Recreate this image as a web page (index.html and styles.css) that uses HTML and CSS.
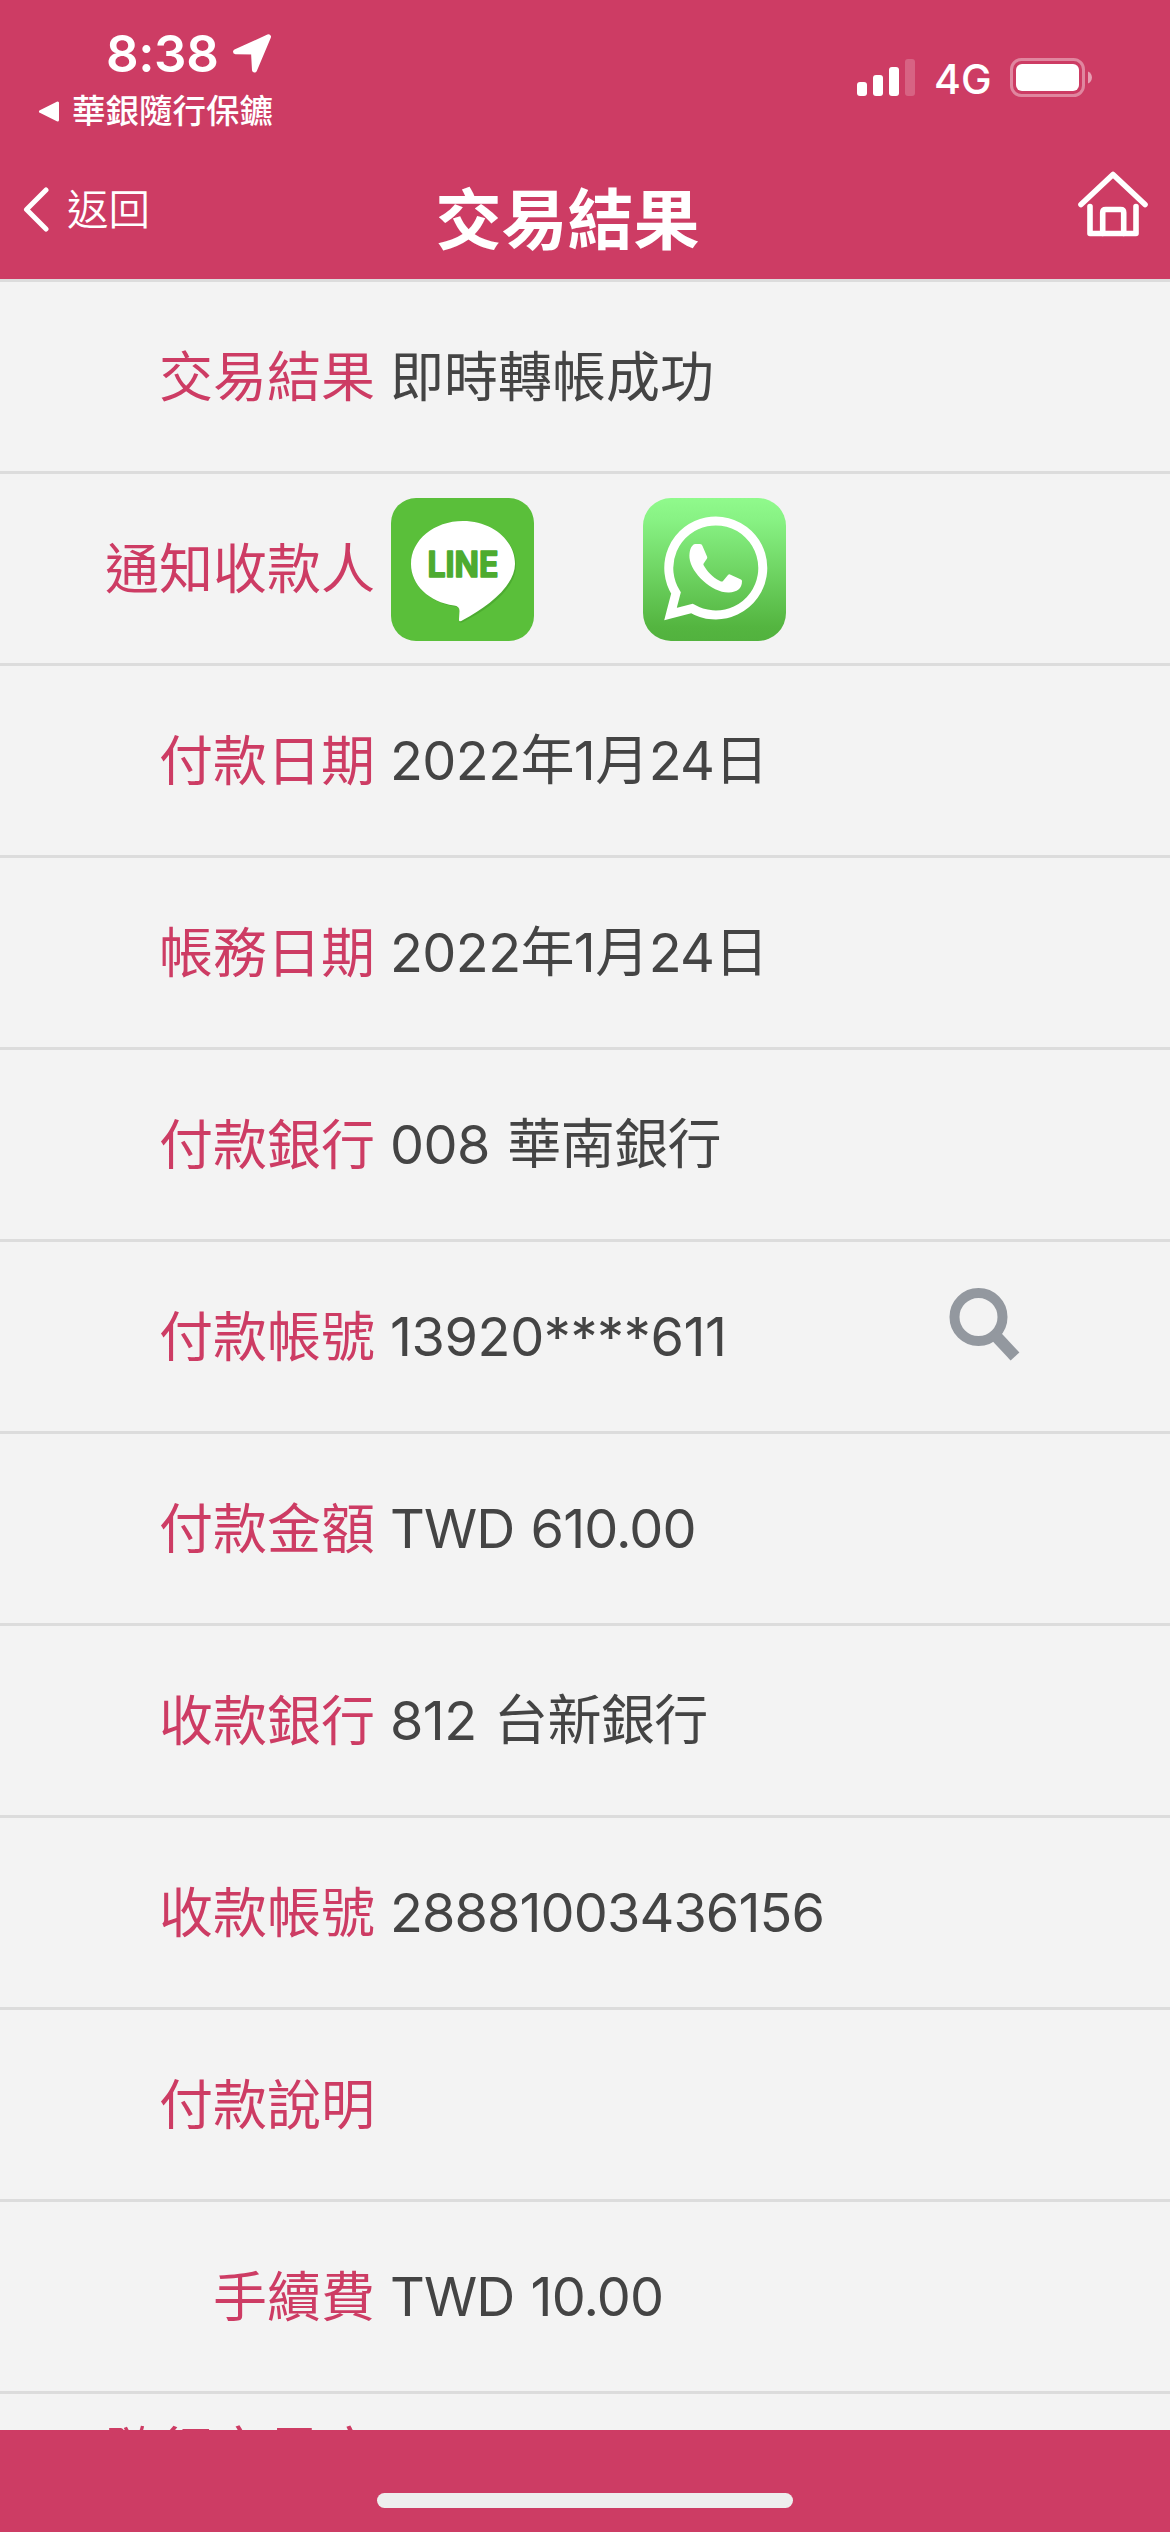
FILE: index.html
```html
<!DOCTYPE html>
<html lang="zh-Hant">

<head>
    <meta charset="UTF-8">
    <meta name="viewport" content="width=device-width, initial-scale=1.0">
    <title>交易結果</title>
    <link rel="stylesheet" href="styles.css">
</head>

<body>
    <header class="header">
        <div class="status-bar">
            <div class="status-left">
                <div class="clock">
                    <span class="time">8:38</span>
                    <svg class="location" viewBox="0 0 40 40">
                        <path d="M3.5 17.8 L36.5 2.8 L22.5 36 L21.5 18 Z" fill="#fff" stroke="#fff" stroke-width="5" stroke-linejoin="round" />
                    </svg>
                </div>
                <div class="back-app">
                    <svg class="triangle" viewBox="0 0 22 21">
                        <path d="M2.5 10.5 L19.5 2 V19 Z" fill="#fff" stroke="#fff" stroke-width="3" stroke-linejoin="round" />
                    </svg>
                    <span>華銀隨行保鑣</span>
                </div>
            </div>
            <div class="status-right">
                <svg class="signal" viewBox="0 0 58 37" fill="#fff">
                    <rect x="0" y="23" width="10" height="14" rx="3" />
                    <rect x="16" y="16" width="10" height="21" rx="3" />
                    <rect x="32" y="8" width="10" height="29" rx="3" />
                    <rect x="48" y="0" width="10" height="37" rx="3" opacity="0.2" />
                </svg>
                <span class="network">4G</span>
                <svg class="battery" viewBox="0 0 82 39">
                    <rect x="1.5" y="1.5" width="72" height="36" rx="10" fill="none" stroke="#fff" stroke-opacity="0.38" stroke-width="3" />
                    <rect x="6" y="6" width="63" height="27" rx="6" fill="#fff" />
                    <path d="M78 13.5 C83.3 15.5 83.3 23.5 78 25.5 Z" fill="#fff" fill-opacity="0.5" />
                </svg>
            </div>
        </div>
        <nav class="nav">
            <div class="back">
                <svg class="chevron" viewBox="0 0 26 46">
                    <path d="M23 3 L3.5 22.5 L23 42" fill="none" stroke="#fff" stroke-width="5" stroke-linecap="round" stroke-linejoin="round" />
                </svg>
                <span>返回</span>
            </div>
            <h1 class="title">交易結果</h1>
            <svg class="home" viewBox="0 0 70 66" fill="none" stroke="#fff" stroke-width="5.6" stroke-linecap="round" stroke-linejoin="round">
                <path d="M3 33.5 L35 3.5 L67 33.5" />
                <path d="M12 35.5 V62.5 H58 V35.5" />
                <path d="M24.7 62.5 V41.5 Q24.7 38.5 27.7 38.5 H42.7 Q45.7 38.5 45.7 41.5 V62.5" />
            </svg>
        </nav>
    </header>

    <main class="list">
        <div class="row">
            <div class="label">交易結果</div>
            <div class="value chinese">即時轉帳成功</div>
        </div>
        <div class="row">
            <div class="label">通知收款人</div>
            <div class="value share">
                <svg class="app" viewBox="0 0 143 143">
                    <rect width="143" height="143" rx="25" fill="#5abf3a" />
                    <path d="M72 24 C101 24 125 42 125 67 C125 91 98 111 72 124 Q68 126 68.5 122 L69 114 Q69 109 64 108.5 C40 105 20 88 20 67 C20 42 43 24 72 24 Z" fill="#3f9a27" opacity="0.5" />
                    <path d="M72 23 C101 23 124 42 124 66 C124 88 96 109 72 122 Q67.5 125 68 121 L68.5 113 Q68.5 108 63 107.5 C38 104 20 87 20 66 C20 42 43 23 72 23 Z" fill="#fff" />
                    <text class="line-text" x="36.5" y="79" textLength="71" lengthAdjust="spacingAndGlyphs">LINE</text>
                </svg>
                <svg class="app" viewBox="0 0 143 143">
                    <defs>
                        <linearGradient id="wa" x1="0" y1="0" x2="0" y2="1">
                            <stop offset="0" stop-color="#90fa8c" />
                            <stop offset="0.15" stop-color="#88f284" />
                            <stop offset="0.9" stop-color="#54b540" />
                            <stop offset="1" stop-color="#52b23e" />
                        </linearGradient>
                    </defs>
                    <rect width="143" height="143" rx="28" fill="url(#wa)" />
                    <path d="M27.5 116 L33 95 A47 47 0 1 1 49 110.5 Z" fill="none" stroke="#fff" stroke-width="9" />
                    <path d="M52 46 C48 47 46 53 46.5 60 C48 75 69 95 86 94.5 C94 94 99 91 99 83 Q99 82 98 81.5 L87 76.5 Q86 76 85 77 L80 83 Q79 84 77 83 C69 79 64 73 60.5 67 Q60 66 61 65 L64 60.5 Q64.5 59.5 64 58.5 L59.5 48 Q59 46 57 46 Z" fill="#fff" />
                </svg>
            </div>
        </div>
        <div class="row">
            <div class="label">付款日期</div>
            <div class="value date">2022年1月24日</div>
        </div>
        <div class="row">
            <div class="label">帳務日期</div>
            <div class="value date">2022年1月24日</div>
        </div>
        <div class="row">
            <div class="label">付款銀行</div>
            <div class="value bank">008 華南銀行</div>
        </div>
        <div class="row">
            <div class="label">付款帳號</div>
            <div class="value masked">13920****611</div>
            <svg class="search" viewBox="0 0 72 76" fill="none" stroke="#93989f">
                <circle cx="30.5" cy="31" r="24" stroke-width="10" />
                <path d="M46 48 L67 70.5" stroke-width="12" />
            </svg>
        </div>
        <div class="row">
            <div class="label">付款金額</div>
            <div class="value number">TWD 610.00</div>
        </div>
        <div class="row">
            <div class="label">收款銀行</div>
            <div class="value bank">812 台新銀行</div>
        </div>
        <div class="row">
            <div class="label">收款帳號</div>
            <div class="value number">28881003436156</div>
        </div>
        <div class="row">
            <div class="label">付款說明</div>
            <div class="value"></div>
        </div>
        <div class="row">
            <div class="label">手續費</div>
            <div class="value number">TWD 10.00</div>
        </div>
        <div class="row">
            <div class="label serial">隨行交易序號</div>
            <div class="value"></div>
        </div>
    </main>

    <footer class="footer">
        <div class="home-indicator"></div>
    </footer>
</body>

</html>
```
FILE: styles.css
```css
* {
    box-sizing: border-box;
}

body {
    margin: 0;
    width: 1170px;
    height: 2532px;
    display: flex;
    flex-direction: column;
    overflow: hidden;
    background: #f3f3f3;
    color: #444;
    font-family: Inter, "Noto Sans CJK TC", sans-serif;
}

svg {
    display: block;
    flex: none;
}

.header {
    flex: none;
    height: 279px;
    background: #cd3c64;
    color: #fff;
}

/* status bar */
.status-bar {
    height: 141px;
    display: flex;
    justify-content: space-between;
}

.clock {
    display: flex;
    align-items: center;
    padding: 24px 0 0 106px;
    gap: 14px;
}

.time {
    width: 112px;
    font-size: 51px;
    font-weight: 600;
    letter-spacing: -0.4px;
    line-height: 60px;
    white-space: nowrap;
}

.location {
    width: 40px;
    height: 40px;
}

.back-app {
    display: flex;
    align-items: center;
    padding-left: 38px;
    gap: 12px;
    font-size: 33.5px;
    font-weight: 500;
    line-height: 54px;
}

.triangle {
    width: 22px;
    height: 21px;
}

.status-right {
    display: flex;
    align-items: flex-start;
    padding: 58px 78px 0 0;
}

.signal {
    width: 58px;
    height: 37px;
    margin-top: 1px;
}

.network {
    width: 57px;
    margin: 0 19px 0 19px;
    font-size: 41px;
    font-weight: 500;
    line-height: 43px;
}

.battery {
    width: 82px;
    height: 39px;
}

/* nav bar */
.nav {
    height: 138px;
    display: flex;
    justify-content: space-between;
    padding: 0 22px 0 23px;
}

.back {
    width: 200px;
    display: flex;
    align-items: flex-start;
    gap: 18px;
    padding-top: 46px;
    font-size: 41.5px;
    font-weight: 350;
    line-height: 46px;
}

.chevron {
    width: 26px;
    height: 46px;
}

.title {
    margin: 0;
    padding-top: 39px;
    font-size: 66px;
    font-weight: 700;
    line-height: 80px;
}

.home {
    width: 70px;
    height: 66px;
    margin: 30px 0 0 166px;
}

/* detail list */
.list {
    flex: 1;
    min-height: 0;
    overflow: hidden;
}

.row {
    height: 192px;
    display: flex;
    align-items: center;
    border-top: 3px solid #dcdcdc;
    font-size: 54px;
    line-height: 72px;
}

.label {
    width: 375px;
    padding: 2px 0 0 100px;
    text-align: right;
    color: #cd3c64;
}

.serial {
    padding-top: 0;
}

.value {
    flex: 1;
    padding-left: 15px;
    white-space: nowrap;
}

.chinese {
    padding-top: 2px;
}

.number {
    letter-spacing: -0.9px;
    word-spacing: 2px;
}

.masked {
    letter-spacing: -0.4px;
}

.date {
    letter-spacing: -0.6px;
}

.bank {
    letter-spacing: -0.6px;
    word-spacing: 3px;
}

.share {
    display: flex;
    padding: 2px 0 0 16px;
    gap: 109px;
}

.app {
    width: 143px;
    height: 143px;
}

.line-text {
    font-size: 35px;
    font-weight: 700;
    fill: #4dab30;
    stroke: #4dab30;
    stroke-width: 1.6px;
    stroke-linejoin: round;
}

.search {
    width: 72px;
    height: 76px;
    margin: -25px 150px 0 0;
}

/* bottom bar */
.footer {
    flex: none;
    height: 102px;
    display: flex;
    justify-content: center;
    background: #cd3c64;
}

.home-indicator {
    width: 416px;
    height: 15px;
    margin-top: 63px;
    border-radius: 8px;
    background: #eee;
}
```
